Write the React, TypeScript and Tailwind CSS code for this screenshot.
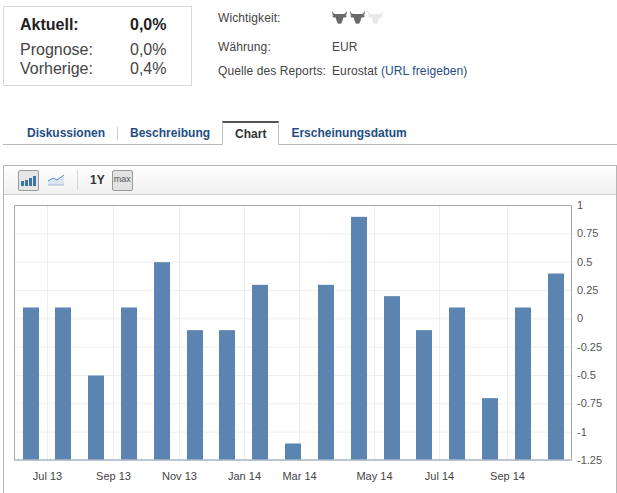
const BARS = [0.1, 0.1, -0.5, 0.1, 0.5, -0.1, -0.1, 0.3, -1.1, 0.3, 0.9, 0.2, -0.1, 0.1, -0.7, 0.1, 0.4];
const BAR_X = [23, 55, 88, 121, 154, 187, 219, 252, 285, 318, 351, 384, 416, 449, 482, 515, 548];
const Y_TICKS = ['1', '0.75', '0.5', '0.25', '0', '-0.25', '-0.5', '-0.75', '-1', '-1.25'];
const X_TICKS = [
  { x: 47, label: 'Jul 13' },
  { x: 113, label: 'Sep 13' },
  { x: 179, label: 'Nov 13' },
  { x: 244, label: 'Jan 14' },
  { x: 299, label: 'Mar 14' },
  { x: 374, label: 'May 14' },
  { x: 439, label: 'Jul 14' },
  { x: 507, label: 'Sep 14' },
];

// chart scale: 1 -> y 205, -1.25 -> y 460 (page coords, svg starts at x 4 / y 195)
const valueY = (v: number) => 205 + ((1 - v) / 2.25) * 255;

function Bull({ light }: { light?: boolean }) {
  return (
    <svg width="15" height="13" viewBox="0 0 15 13" className={light ? 'text-[#e8e8e8]' : 'text-[#6a6a6a]'}>
      <path
        fill="currentColor"
        d="M0.5 0 L1.5 2.2 Q2.2 3 3.5 3 L11.5 3 Q12.8 3 13.5 2.2 L14.5 0 Q15.4 3.4 13.4 4.6 L15 4.8 L13.6 6.6 L11.4 6.6 L10.4 10 L9.4 12.2 Q7.5 13.4 5.6 12.2 L4.6 10 L3.6 6.6 L1.4 6.6 L0 4.8 L1.6 4.6 Q-0.4 3.4 0.5 0 Z"
      />
    </svg>
  );
}

function Tab({ label, active, divider }: { label: string; active?: boolean; divider?: boolean }) {
  if (active) {
    return (
      <div className="h-6 -mb-px -ml-px px-3 flex items-center bg-white border-t-2 border-x border-t-[#555555] border-x-[#c4c4c4] text-[#333333] font-bold">
        {label}
      </div>
    );
  }
  return (
    <div className={`pl-3 pr-[13px] flex items-center text-[#1f4d85] font-bold ${divider ? 'relative' : ''}`}>
      {label}
      {divider && <span className="absolute right-0 top-[6px] h-[13px] w-px bg-[#d0d0d0]" />}
    </div>
  );
}

export default function App() {
  return (
    <div className="h-[493px] w-[617px] overflow-hidden bg-white text-[#333333] font-['Liberation_Sans',Arial,sans-serif]">
      <div className="flex pt-[6px] pl-[3px]">
        {/* Summary box */}
        <div className="w-[189px] h-[80px] border border-[#d9d9d9] pl-4 pt-[9px] text-base">
          <div className="flex font-bold text-[#222222] leading-[18px]">
            <span className="w-[110px]">Aktuell:</span>
            <span>0,0%</span>
          </div>
          <div className="flex mt-[7px] leading-[18px] text-[#444444]">
            <span className="w-[110px]">Prognose:</span>
            <span>0,0%</span>
          </div>
          <div className="flex leading-[19px] text-[#444444]">
            <span className="w-[110px]">Vorherige:</span>
            <span>0,4%</span>
          </div>
        </div>

        {/* Details */}
        <div className="ml-[26px] text-xs text-[#444444] tracking-[0.1px]">
          <div className="flex h-[24px] pt-[4px]">
            <span className="w-[114px]">Wichtigkeit:</span>
            <div className="flex gap-[3px] pt-[1px]">
              <Bull />
              <Bull />
              <Bull light />
            </div>
          </div>
          <div className="flex mt-[5px] h-[24px] pt-[4px]">
            <span className="w-[114px]">Währung:</span>
            <span>EUR</span>
          </div>
          <div className="flex h-[24px]">
            <span className="w-[114px] pt-[4px]">Quelle des Reports:</span>
            <span className="pt-[4px]">
              Eurostat <span className="text-[#1f4d85]">(URL freigeben)</span>
            </span>
          </div>
        </div>
      </div>

      {/* Tabs */}
      <div className="mt-[35px] ml-[3px] flex h-[24px] border-b border-[#b9b9b9] text-xs">
        <div className="pl-3 flex">
          <Tab label="Diskussionen" divider />
          <Tab label="Beschreibung" />
        </div>
        <Tab label="Chart" active />
        <Tab label="Erscheinungsdatum" />
      </div>

      {/* Chart panel */}
      <div className="mt-[20px] ml-[3px] w-[614px] border border-[#b5b5b5] h-[340px]">
        <div className="h-[29px] flex items-center pl-[14px] border-b border-[#cccccc] bg-gradient-to-b from-white to-[#f1f1f1]">
          <div className="w-[21px] h-[21px] flex items-center justify-center rounded-[2px] border border-[#999999] bg-[#e6e6e6]">
            <svg width="15" height="11" viewBox="0 0 15 11">
              <path fill="#3e73ab" d="M0 6h3v5H0zM4 5h3v6H4zM8 3h3v8H8zM12 1h3v10h-3z" />
            </svg>
          </div>
          <div className="ml-[9px] w-[17px]">
            <svg width="17" height="12" viewBox="0 0 17 12">
              <path d="M0 7 L5 4 L9 6 L16 1 L16 11 L0 11 Z" fill="#dbe6f1" />
              <path d="M0 7 L5 4 L9 6 L16 1" fill="none" stroke="#5a8bbd" strokeWidth="1" />
              <path d="M0 11 H16" stroke="#9db9d6" strokeWidth="1" />
            </svg>
          </div>
          <div className="ml-[12px] w-px h-[20px] bg-[#d2d2d2]" />
          <span className="ml-[12px] text-xs font-bold text-[#333333]">1Y</span>
          <div className="ml-[7px] w-[21px] h-[21px] flex items-center justify-center rounded-[2px] border border-[#999999] bg-[#e2e2e2] text-[9px] text-[#555555]">
            max
          </div>
        </div>

        <svg width="612" height="310" viewBox="4 195 612 310" className="block text-[11px]" fontFamily="'Liberation Sans', Arial, sans-serif">
          {/* grid */}
          {Y_TICKS.map((t, i) => (
            <line key={t} x1="14" x2="571" y1={205.5 + i * 28.33} y2={205.5 + i * 28.33} stroke="#eeeeee" />
          ))}
          {X_TICKS.map((t) => (
            <line key={t.label} x1={t.x + 0.5} x2={t.x + 0.5} y1="205" y2="460" stroke="#eeeeee" />
          ))}
          {/* bars grow from the chart floor */}
          {BARS.map((v, i) => (
            <rect key={i} x={BAR_X[i]} y={valueY(v) + 0.5} width="16" height={459.5 - valueY(v)} fill="#5b84b1" />
          ))}
          {/* frame */}
          <path d="M14.5 460 V205.5 H571.5 V460" fill="none" stroke="#a8a8a8" />
          <path d="M14 460 H572" stroke="#a9b7c7" strokeWidth="1.4" />
          {/* labels */}
          {Y_TICKS.map((t, i) => (
            <text key={t} x="577" y={209 + i * 28.33} fill="#555555" fontSize="11">
              {t}
            </text>
          ))}
          {X_TICKS.map((t) => (
            <text key={t.label} x={t.x + 0.5} y="480" textAnchor="middle" fill="#444444" fontSize="11">
              {t.label}
            </text>
          ))}
        </svg>
      </div>
    </div>
  );
}
